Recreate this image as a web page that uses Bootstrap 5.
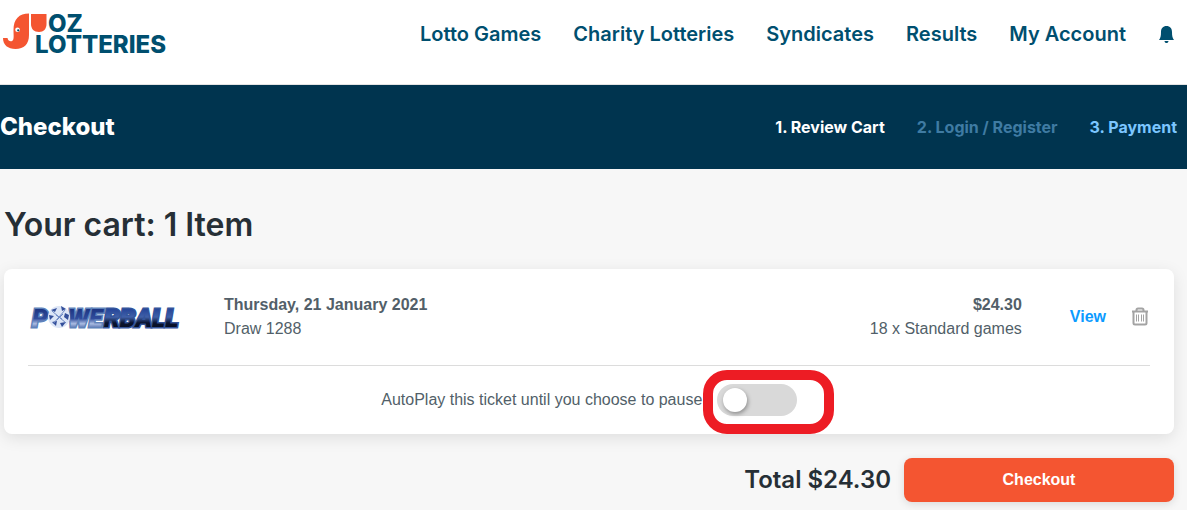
<!DOCTYPE html>
<html lang="en">
<head>
<meta charset="utf-8">
<meta name="viewport" content="width=device-width, initial-scale=1">
<title>Checkout - Oz Lotteries</title>
<link href="https://cdn.jsdelivr.net/npm/bootstrap@5.3.0/dist/css/bootstrap.min.css" rel="stylesheet">
<style>
  body { background: #f7f7f7; color: #525f69; font-family: "Liberation Sans", Arial, sans-serif; font-size: 16px; line-height: 24px; }
  a { text-decoration: none; }
  svg { overflow: visible; }
  .brand-font { font-family: Inter, Lato, sans-serif; font-weight: 600; }
  .site-header { height: 85px; border-bottom: 1px solid #e4e4e4; padding: 0 12px 16px 0; }
  .site-nav { gap: 32px; font-size: 20px; line-height: 24px; }
  .site-nav a { color: #004f6f; }
  .step-bar { height: 84px; background: #00344f; padding-right: 10px; }
  .step-bar h1 { font-size: 24px; line-height: 32px; font-weight: 800; }
  .steps { gap: 32px; font-size: 16px; font-weight: 700; }
  .step-idle { color: #3f7ba3; }
  .step-next { color: #7cc6ff; }
  .cart { padding: 34px 13px 8px 4px; }
  .cart h2 { font-size: 32px; line-height: 44px; margin-bottom: 22px; color: #262f36; }
  .ticket { background: #fff; border-radius: 8px; padding: 0 24px; box-shadow: 0 4px 16px rgba(0,0,0,.1); }
  .ticket-row { height: 97px; border-bottom: 1px solid #dcdcdc; }
  .ticket-logo { width: 196px; }
  .ticket-view { color: #0c9bff; margin-left: 48px; }
  .ticket-bin { margin-left: 24px; line-height: 0; }
  .autoplay { height: 68px; gap: 10px; }
  .autoplay .form-switch { width: 80px; height: 32px; min-height: 0; padding: 0; margin: 0; }
  .autoplay .form-check-input { width: 80px; height: 32px; margin: 0; float: none; display: block; border: 0; background-color: #d9d9d9; background-image: none; }
  .autoplay .form-check-input::before { content: ""; display: block; width: 24px; height: 24px; margin: 4px 6px; border-radius: 50%; background: #fff; box-shadow: 1px 2px 4px rgba(0,0,0,.35); }
  .autoplay .form-check-input:checked { background-color: #0c9bff; }
  .autoplay .form-check-input:checked::before { margin-left: 50px; }
  .callout-ring { position: absolute; inset: -14px -37px -18px -14px; border: 10px solid #ed1c24; border-radius: 24px; pointer-events: none; }
  .total-row { margin-top: 24px; gap: 13px; }
  .total { font-size: 24px; line-height: 32px; color: #262f36; }
  .btn-pay { --bs-btn-color: #fff; --bs-btn-bg: #f45531; --bs-btn-hover-color: #fff; --bs-btn-hover-bg: #dc4522; width: 270px; height: 44px; border: 0; border-radius: 8px; box-shadow: 0 2px 8px rgba(0,0,0,.12); }
</style>
</head>
<body>
<header class="site-header bg-white d-flex align-items-center justify-content-between">
  <a href="#" aria-label="Oz Lotteries">
    <svg class="d-block" width="170" height="48" viewBox="0 10 170 48">
      <path fill="#f45531" d="M29 13.500V35C29 44 24 49 15.500 49C8 49 3 45 3 38H7.500C8 40.500 9.500 41.500 11.500 41.200C14.500 40.500 13.500 36 13.500 30C13.500 19 19 13.500 29 13.500Z"/>
      <path fill="#f45531" d="M31 14H46.500V24C46.500 29 43.500 32 39 32C34 32 31 29 31 24Z"/>
      <circle cx="17.500" cy="29.800" r="2.300" fill="#fff"/><circle cx="18.200" cy="30.300" r="1.100" fill="#004f6f"/>
      <g fill="#004f6f" font-family="Inter, sans-serif" font-weight="800" font-size="24">
        <text x="48" y="32">OZ</text><text x="35" y="53">LOTTERIES</text>
      </g>
    </svg>
  </a>
  <nav class="site-nav brand-font d-flex align-items-center">
    <a href="#">Lotto Games</a><a href="#">Charity Lotteries</a><a href="#">Syndicates</a><a href="#">Results</a><a href="#">My Account</a>
    <a href="#" aria-label="Notifications"><svg class="d-block" width="17" height="20" viewBox="0 0 17 20"><path fill="#004f6f" d="M8.500 2C12 2 14 4.500 14 8C14 12 14.500 14 16 16H1C2.500 14 3 12 3 8C3 4.500 5 2 8.500 2ZM6.500 17H10.500C10.300 18.500 9.500 19 8.500 19C7.500 19 6.700 18.500 6.500 17Z"/></svg></a>
  </nav>
</header>
<div class="step-bar brand-font d-flex align-items-center justify-content-between">
  <h1 class="text-white m-0">Checkout</h1>
  <div class="steps d-flex">
    <span class="text-white">1. Review Cart</span><span class="step-idle">2. Login / Register</span><span class="step-next">3. Payment</span>
  </div>
</div>
<main class="cart">
  <h2 class="brand-font">Your cart: 1 Item</h2>
  <section class="ticket">
    <div class="ticket-row d-flex align-items-center">
      <div class="ticket-logo">
        <svg class="d-block" width="156" height="28" viewBox="0 0 156 28" role="img" aria-label="Powerball">
          <defs>
            <linearGradient id="chrome" x1="0" y1="0" x2="0" y2="1"><stop offset="0.150" stop-color="#1c3380"/><stop offset="0.500" stop-color="#304c9c"/><stop offset="0.680" stop-color="#a9bce2"/><stop offset="0.850" stop-color="#4b66a6"/></linearGradient>
            <linearGradient id="chromeDark" x1="0" y1="0" x2="0" y2="1"><stop offset="0.200" stop-color="#28479a"/><stop offset="0.450" stop-color="#4060a8"/><stop offset="0.650" stop-color="#0a1430"/><stop offset="0.900" stop-color="#050b1c"/></linearGradient>
          </defs>
          <g font-family="Roboto, sans-serif" font-weight="900" font-style="italic" font-size="25" stroke-width="3" paint-order="stroke">
            <text x="4" y="24" fill="url(#chrome)" stroke="#5f83ba">P</text>
            <text x="40" y="24" fill="url(#chrome)" stroke="#5f83ba">WE</text>
            <text x="76" y="24" fill="url(#chromeDark)" stroke="#34549a">RBALL</text>
          </g>
          <circle cx="31" cy="14" r="11" fill="#dce5f6"/>
          <path fill="#344f9a" d="M23 7L29 5L27 9ZM33 3L38 6L34 8ZM37 10L41 12L40 17L36 14ZM21 12L26 13L22 17ZM24 19L29 18L28 23ZM32 20L38 19L34 24Z"/>
          <path fill="none" stroke="#6e89c4" stroke-width="1" d="M24 8L38 20M25 21L37 7M28 12L34 16M29 17L35 11"/>
        </svg>
      </div>
      <div class="flex-grow-1"><strong>Thursday, 21 January 2021</strong><br>Draw 1288</div>
      <div class="text-end"><strong>$24.30</strong><br>18 x Standard games</div>
      <a class="ticket-view fw-bold" href="#">View</a>
      <button class="ticket-bin btn p-0 border-0" type="button" aria-label="Remove ticket">
        <svg width="20" height="20" viewBox="0 0 20 20" fill="none" stroke="#a3a3a3"><path stroke-width="2" d="M2 4.500H18M6.500 4.500V3Q6.500 1.500 8 1.500H12Q13.500 1.500 13.500 3V4.500M3.500 4.500V16Q3.500 17.500 5 17.500H15Q16.500 17.500 16.500 16V4.500"/><path d="M6.500 7.500V14.500M8.500 7.500V14.500M11.500 7.500V14.500M13.500 7.500V14.500"/></svg>
      </button>
    </div>
    <div class="autoplay d-flex align-items-center justify-content-center">
      <label for="autoplay">AutoPlay this ticket until you choose to pause.</label>
      <div class="form-check form-switch position-relative">
        <input class="form-check-input" type="checkbox" role="switch" id="autoplay">
        <span class="callout-ring"></span>
      </div>
    </div>
  </section>
  <div class="total-row d-flex align-items-center justify-content-end">
    <span class="total brand-font">Total $24.30</span>
    <button class="btn btn-pay fw-bold" type="button">Checkout</button>
  </div>
</main>
<script src="https://cdn.jsdelivr.net/npm/bootstrap@5.3.0/dist/js/bootstrap.bundle.min.js"></script>
</body>
</html>
